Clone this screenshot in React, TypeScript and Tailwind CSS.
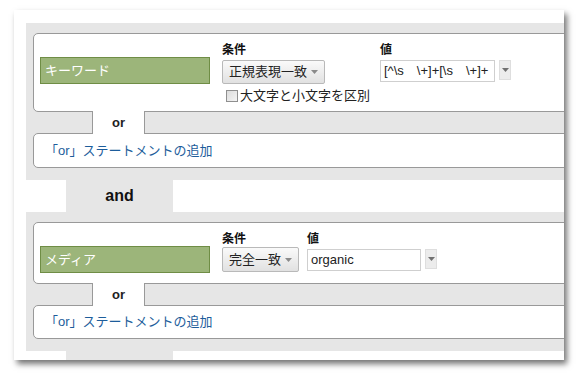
import React from 'react';

const font = "font-['Liberation_Sans','Noto_Sans_CJK_JP',sans-serif]";

function Caret({ className }: { className: string }) {
  return (
    <svg width="7" height="4" viewBox="0 0 7 4" className={className}>
      <path d="M0 0 H7 L3.5 4 Z" fill="currentColor" />
    </svg>
  );
}

function SelectButton({ label }: { label: string }) {
  return (
    <div className="inline-flex items-center h-full px-[6px] border border-[#b9b9b9] rounded-[2px] bg-gradient-to-b from-[#fafafa] to-[#e1e1e1] text-[13px] text-[#222]">
      <span>{label}</span>
      <Caret className="ml-[4px] mt-[1px] text-[#8a8a8a]" />
    </div>
  );
}

function ValueInput({ value, width }: { value: string; width: string }) {
  return (
    <div className="flex items-start">
      <div className={`${width} h-[22px] border border-[#cfcfcf] bg-white flex items-center px-[3px] text-[13px] text-[#222] whitespace-pre`}>
        {value}
      </div>
      <div className="ml-[4px] w-[12px] h-[20px] bg-[#ececec] border border-[#dedede] flex items-center justify-center">
        <Caret className="text-[#707070]" />
      </div>
    </div>
  );
}

function OrTab() {
  return (
    <div className="h-[21px] flex">
      <div className="relative z-10 ml-[59px] -mt-[1px] w-[53px] h-[23px] bg-white border-x border-[#999] flex items-center justify-center text-[13px] font-bold text-[#222]">
        or
      </div>
    </div>
  );
}

function AddOr({ height }: { height: string }) {
  return (
    <div className={`w-[560px] ${height} bg-white border border-[#999] rounded-l-[5px] flex items-center pl-[11px] text-[13px] text-[#1d5d9b]`}>
      「or」ステートメントの追加
    </div>
  );
}

export default function App() {
  return (
    <div className={`w-[578px] h-[379px] bg-white pt-[10px] pl-[14px] ${font}`}>
      <div className="w-[550px] h-[350px] bg-white overflow-hidden shadow-[3px_4px_6px_rgba(0,0,0,0.55)] pt-[13px] pl-[12px]">
        {/* first statement */}
        <div className="bg-[#e6e6e6] pt-[10px] pl-[7px] pb-[12px]">
          <div className="w-[560px] h-[79px] bg-white border border-[#999] rounded-l-[5px] flex items-start pl-[6px]">
            <div className="mt-[23px] w-[170px] h-[27px] bg-[#9cb57a] border border-[#6f8d45] flex items-center pl-[4px] text-[13px] text-white">
              キーワード
            </div>
            <div className="ml-[12px] w-[158px] pt-[9px]">
              <div className="text-[12px] font-bold leading-[15px] text-[#111]">条件</div>
              <div className="mt-[1px] h-[24px]">
                <SelectButton label="正規表現一致" />
              </div>
              <div className="mt-[5px] flex items-center text-[13px] text-[#222] leading-[16px]">
                <div className="ml-[4px] mr-[2px] w-[12px] h-[12px] border border-[#8f8f8f] bg-gradient-to-br from-[#dcdcdc] to-[#f4f4f4]" />
                大文字と小文字を区別
              </div>
            </div>
            <div className="pt-[9px]">
              <div className="text-[12px] font-bold leading-[15px] text-[#111]">値</div>
              <div className="mt-[2px]">
                <ValueInput value={'[^\\s　\\+]+[\\s　\\+]+'} width="w-[115px]" />
              </div>
            </div>
          </div>
          <OrTab />
          <AddOr height="h-[35px]" />
        </div>

        {/* and */}
        <div className="h-[32px] flex">
          <div className="ml-[40px] w-[107px] bg-[#e6e6e6] flex items-center justify-center text-[16px] font-bold text-[#111]">
            and
          </div>
        </div>

        {/* second statement */}
        <div className="bg-[#e6e6e6] pt-[10px] pl-[7px] pb-[12px]">
          <div className="w-[560px] h-[62px] bg-white border border-[#999] rounded-l-[5px] flex items-start pl-[6px]">
            <div className="mt-[23px] w-[170px] h-[27px] bg-[#9cb57a] border border-[#6f8d45] flex items-center pl-[4px] text-[13px] text-white">
              メディア
            </div>
            <div className="ml-[12px] w-[85px] pt-[9px]">
              <div className="text-[12px] font-bold leading-[15px] text-[#111]">条件</div>
              <div className="h-[25px]">
                <SelectButton label="完全一致" />
              </div>
            </div>
            <div className="pt-[9px]">
              <div className="text-[12px] font-bold leading-[15px] text-[#111]">値</div>
              <div className="mt-[2px]">
                <ValueInput value="organic" width="w-[114px]" />
              </div>
            </div>
          </div>
          <OrTab />
          <AddOr height="h-[34px]" />
        </div>

        <div className="h-[20px] flex">
          <div className="ml-[40px] w-[107px] bg-[#e6e6e6]" />
        </div>
      </div>
    </div>
  );
}
